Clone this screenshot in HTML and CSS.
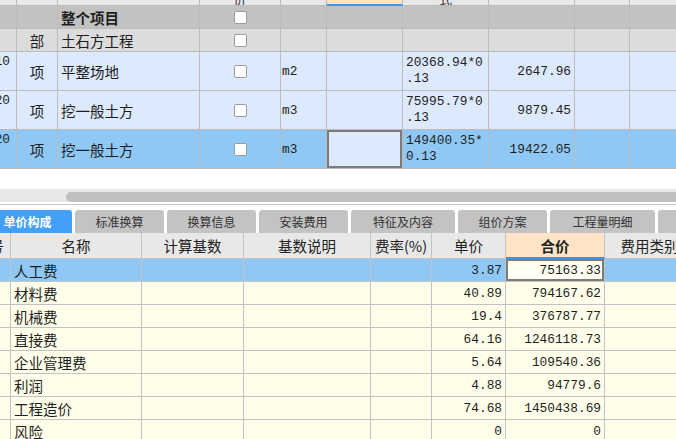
FILE: index.html
```html
<!DOCTYPE html>
<html lang="zh-CN">
<head>
<meta charset="utf-8">
<title>单价构成</title>
<link rel="stylesheet" href="styles.css">
</head>
<body>
<div class="tgrid">
  <div class="row head">
    <div></div><div></div><div></div><div><span>价</span></div><div></div><div class="hl"></div><div><span>式</span></div><div></div><div></div><div></div>
  </div>
  <div class="row group">
    <div></div><div></div><div class="bold">整个项目</div><div class="cb"><i class="box"></i></div><div></div><div></div><div></div><div></div><div></div><div></div>
  </div>
  <div class="row sub">
    <div></div><div class="ctr">部</div><div>土石方工程</div><div class="cb"><i class="box"></i></div><div></div><div></div><div></div><div></div><div></div><div></div>
  </div>
  <div class="row item">
    <div class="code"><span>010</span></div><div class="ctr">项</div><div>平整场地</div><div class="cb"><i class="box"></i></div><div class="unit">m2</div><div></div><div class="expr">20368.94*0.13</div><div class="num">2647.96</div><div></div><div></div>
  </div>
  <div class="row item">
    <div class="code"><span>020</span></div><div class="ctr">项</div><div>挖一般土方</div><div class="cb"><i class="box"></i></div><div class="unit">m3</div><div></div><div class="expr">75995.79*0.13</div><div class="num">9879.45</div><div></div><div></div>
  </div>
  <div class="row sel">
    <div class="code"><span>020</span></div><div class="ctr">项</div><div>挖一般土方</div><div class="cb"><i class="box"></i></div><div class="unit">m3</div><div class="cur"></div><div class="expr">149400.35*0.13</div><div class="num">19422.05</div><div></div><div></div>
  </div>
</div>

<div class="spacer"></div>
<div class="hscroll"><div class="thumb"></div></div>
<div class="divider"></div>

<div class="tabs">
  <div class="tab active">单价构成</div>
  <div class="tab w89">标准换算</div>
  <div class="tab w89">换算信息</div>
  <div class="tab w89">安装费用</div>
  <div class="tab w104">特征及内容</div>
  <div class="tab w89">组价方案</div>
  <div class="tab w105">工程量明细</div>
  <div class="tab w89"></div>
</div>

<div class="bgrid">
  <div class="brow bhead">
    <div class="lead">号</div><div>名称</div><div>计算基数</div><div>基数说明</div><div>费率(%)</div><div>单价</div><div class="hl">合价</div><div>费用类别</div>
  </div>
  <div class="brow sel">
    <div></div><div>人工费</div><div></div><div></div><div></div><div class="num">3.87</div><div class="num cur">75163.33</div><div></div>
  </div>
  <div class="brow">
    <div></div><div>材料费</div><div></div><div></div><div></div><div class="num">40.89</div><div class="num">794167.62</div><div></div>
  </div>
  <div class="brow">
    <div></div><div>机械费</div><div></div><div></div><div></div><div class="num">19.4</div><div class="num">376787.77</div><div></div>
  </div>
  <div class="brow">
    <div></div><div>直接费</div><div></div><div></div><div></div><div class="num">64.16</div><div class="num">1246118.73</div><div></div>
  </div>
  <div class="brow">
    <div></div><div>企业管理费</div><div></div><div></div><div></div><div class="num">5.64</div><div class="num">109540.36</div><div></div>
  </div>
  <div class="brow">
    <div></div><div>利润</div><div></div><div></div><div></div><div class="num">4.88</div><div class="num">94779.6</div><div></div>
  </div>
  <div class="brow">
    <div></div><div>工程造价</div><div></div><div></div><div></div><div class="num">74.68</div><div class="num">1450438.69</div><div></div>
  </div>
  <div class="brow">
    <div></div><div>风险</div><div></div><div></div><div></div><div class="num">0</div><div class="num">0</div><div></div>
  </div>
</div>
</body>
</html>
```

FILE: styles.css
```css
html, body {
  margin: 0;
  padding: 0;
  width: 676px;
  height: 439px;
  overflow: hidden;
  background: #ffffff;
}
body {
  font-family: "Noto Sans CJK SC", "Noto Sans", sans-serif;
  color: #1e1e1e;
}

/* ---------- top grid ---------- */
.tgrid {
  display: grid;
  grid-template-columns: 17px 41px 142px 81px 46px 76px 86px 86px 55px 60px;
  grid-template-rows: 6px 23px 23px 39px 39px 39px;
  width: 690px;
}
.row { display: contents; }
.row > div {
  box-sizing: border-box;
  border-right: 1px solid #bcbcbc;
  border-bottom: 1px solid #bcbcbc;
  display: flex;
  align-items: center;
  padding: 0 3px;
  overflow: hidden;
  white-space: nowrap;
  min-width: 0;
  font-size: 14.5px;
}
.head > div {
  background: #e8e8e8;
  align-items: flex-end;
  justify-content: center;
  font-size: 13px;
  line-height: 13px;
  color: #333;
}
.head > .hl {
  background: #fde3c0;
  border-bottom: 2px solid #3d95f2;
}
.group > div { background: #c2c2c2; }
.sub > div { background: #dcdcdc; }
.item > div { background: #dde9fc; }
.sel > div { background: #90c8f5; }
.row > .cur {
  background: #dde9fc;
  box-shadow: inset 0 0 0 2px #7c7c7c;
}
.bold { font-weight: 700; }
.ctr { justify-content: center; }
.row > .code {
  justify-content: flex-end;
  align-items: flex-start;
  padding: 2px 6px 0 0;
  font-family: "Liberation Mono", monospace;
  font-size: 12.8px;
  line-height: 16px;
}
.row > .cb { justify-content: center; }
.box {
  display: block;
  width: 13px;
  height: 13px;
  box-sizing: border-box;
  border: 1px solid #9c9c9c;
  border-radius: 2px;
  background: #ffffff;
}
.row > .unit {
  padding-left: 1px;
  font-family: "Liberation Mono", monospace;
  font-size: 12.8px;
}
.row > .expr {
  white-space: normal;
  word-break: break-all;
  line-break: anywhere;
  overflow-wrap: anywhere;
  font-family: "Liberation Mono", monospace;
  font-size: 12.8px;
  line-height: 16px;
  padding: 0 3px;
}
.row > .num {
  justify-content: flex-end;
  font-family: "Liberation Mono", monospace;
  font-size: 12.8px;
}

/* ---------- scroll + divider ---------- */
.spacer { height: 20px; }
.hscroll {
  height: 13px;
  box-sizing: border-box;
  padding: 3px 0 0 66px;
  background: #e8e8e8;
}
.thumb {
  height: 10px;
  border-radius: 5px 0 0 5px;
  background: #c0c0c0;
}
.divider {
  margin-top: 2px;
  height: 1px;
  background: #c8c8c8;
  margin-bottom: 5px;
}

/* ---------- tabs ---------- */
.tabs {
  display: flex;
  gap: 3px;
  height: 23px;
}
.tab {
  flex: none;
  box-sizing: border-box;
  background: #c3c3c3;
  border-radius: 3px 3px 0 0;
  font-size: 12px;
  color: #333;
  display: flex;
  align-items: center;
  justify-content: center;
}
.tab.active {
  width: 89px;
  margin-left: -17px;
  background: #449ff6;
  color: #ffffff;
  font-weight: 700;
}
.w89 { width: 89px; }
.w104 { width: 104px; }
.w105 { width: 105px; }

/* ---------- bottom grid ---------- */
.bgrid {
  display: grid;
  grid-template-columns: 11px 131px 102px 127px 61px 74px 99px 90px;
  grid-template-rows: 26px repeat(8, 23px);
  width: 695px;
}
.brow { display: contents; }
.brow > div {
  box-sizing: border-box;
  border-right: 1px solid #c2c2c2;
  border-bottom: 1px solid #c2c2c2;
  display: flex;
  align-items: center;
  padding: 0 3px;
  overflow: hidden;
  white-space: nowrap;
  min-width: 0;
  font-size: 14.5px;
  background: #fffeea;
}
.bhead > div {
  background: #e8e8e8;
  justify-content: center;
  color: #222;
}
.bhead > .lead {
  justify-content: flex-end;
  padding: 0 6px 0 0;
}
.bhead > .hl {
  background: #ffe5c6;
  font-weight: 700;
  border-bottom: 2px solid #3d95f2;
}
.brow.sel > div { background: #90c8f5; }
.brow > .num {
  justify-content: flex-end;
  font-family: "Liberation Mono", monospace;
  font-size: 12.8px;
}
.brow.sel > .cur {
  background: #fffff4;
  box-shadow: inset 0 0 0 2px #7c7c7c;
}
```
